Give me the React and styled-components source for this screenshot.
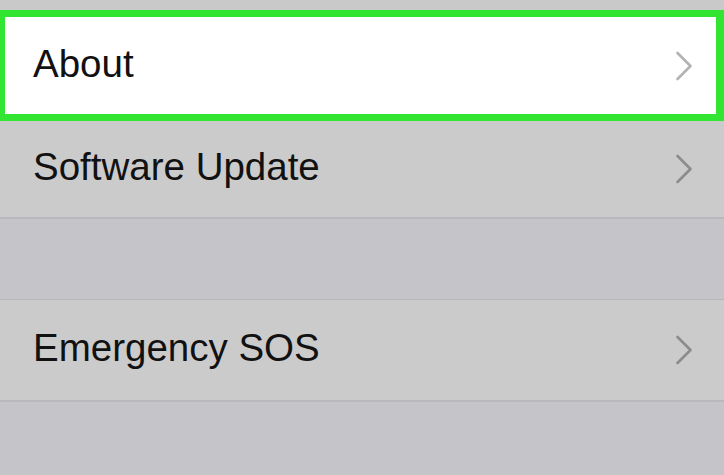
import React from "react";
import styled, { createGlobalStyle } from "styled-components";

const GlobalStyle = createGlobalStyle`
  html, body {
    margin: 0;
    padding: 0;
    background: #c5c4c9;
    font-family: "Liberation Sans", Arial, sans-serif;
    overflow: hidden;
  }
`;

const Page = styled.div`
  width: 724px;
  height: 475px;
  display: flex;
  flex-direction: column;
  background: #c5c4c9;
`;

const Group = styled.div`
  display: flex;
  flex-direction: column;
  background: #cbcbcb;
  border-top: ${(p) => (p.$noTop ? "none" : "1px solid #b7b6bb")};
  border-bottom: 2px solid #b9b8bd;
`;

const Peek = styled.div`
  height: 10px;
  background: #c9c9c9;
`;

const Gap = styled.div`
  height: 80px;
`;

const Row = styled.div`
  display: flex;
  align-items: center;
  justify-content: space-between;
  box-sizing: border-box;
  height: ${(p) => p.$h}px;
  padding: 0 31px 0 33px;
  background: ${(p) => (p.$active ? "#ffffff" : "#cbcbcb")};
  ${(p) =>
    p.$active &&
    `
    border: 7px solid #33e533;
    border-left-width: 5px;
    border-right-width: 8px;
    padding-left: 28px;
    padding-right: 23px;
    box-shadow: 0 2px 0 #dcdcdc;
  `}
`;

const Label = styled.span`
  font-size: 38.5px;
  line-height: 1;
  color: #111111;
  margin-top: -3px;
`;

const Chevron = ({ color }) => (
  <svg width="18" height="30" viewBox="0 0 18 30">
    <path
      d="M2.5 2 L15.5 15 L2.5 28"
      fill="none"
      stroke={color}
      strokeWidth="2.6"
      strokeLinecap="round"
      strokeLinejoin="round"
    />
  </svg>
);

export default function App() {
  return (
    <Page>
      <GlobalStyle />
      <Group $noTop>
        <Peek />
        <Row $active $h={111}>
          <Label>About</Label>
          <Chevron color="#b3b3b3" />
        </Row>
        <Row $h={96}>
          <Label>Software Update</Label>
          <Chevron color="#8c8c8c" />
        </Row>
      </Group>
      <Gap />
      <Group>
        <Row $h={100}>
          <Label>Emergency SOS</Label>
          <Chevron color="#8c8c8c" />
        </Row>
      </Group>
    </Page>
  );
}
